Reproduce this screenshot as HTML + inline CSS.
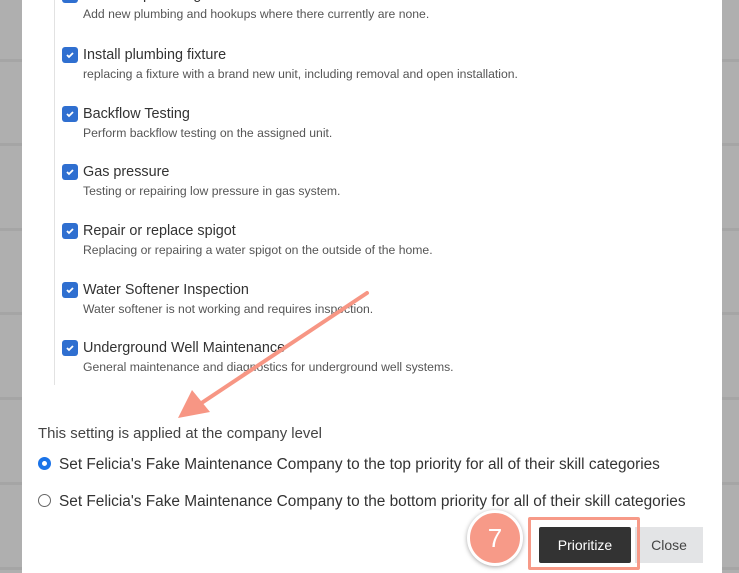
<!DOCTYPE html>
<html><head><style>
*{margin:0;padding:0;box-sizing:border-box}
body{width:739px;height:573px;overflow:hidden;background:#afafaf;position:relative;font-family:"Liberation Sans",Arial,sans-serif;color:#333}
.hl{position:absolute;height:3px;background:#a5a5a5}
.modal{position:absolute;left:22px;top:0;width:700px;height:573px;background:#fff}
.vline{position:absolute;left:32px;top:0;width:1px;height:385px;background:#e2e2e2}
.item{position:absolute;left:40px}
.cb{position:absolute;left:0;top:0;width:16px;height:16px;background:#2f6fd0;border-radius:3px}
.cb svg{position:absolute;left:2px;top:2px}
.t{position:absolute;left:21px;top:0px;font-size:14.4px;color:#333;white-space:nowrap}
.d{position:absolute;left:21px;top:20px;font-size:12.2px;color:#555;white-space:nowrap}
.txt{position:absolute;left:16px;top:426px;font-size:14.9px;color:#444}
.r{position:absolute;left:16px;font-size:15.4px;color:#333;white-space:nowrap}
.r span{display:inline-block;width:13px;height:13px;border-radius:50%;border:1px solid #666;vertical-align:-1px;margin-right:8px}
</style></head><body>
<div class="hl" style="left:0;top:59px;width:739px"></div>
<div class="hl" style="left:0;top:143px;width:739px"></div>
<div class="hl" style="left:0;top:228px;width:739px"></div>
<div class="hl" style="left:0;top:312px;width:739px"></div>
<div class="hl" style="left:0;top:397px;width:739px"></div>
<div class="hl" style="left:0;top:482px;width:739px"></div>
<div class="hl" style="left:0;top:567px;width:739px"></div>
<div class="modal">
<div class="vline"></div>
<div class="item" style="top:-13px"><div class="cb"><svg width="12" height="12"><path d="M3 6l2 2 4-4" stroke="#fff" stroke-width="1.8" fill="none"/></svg></div><div class="t">Add new plumbing</div><div class="d">Add new plumbing and hookups where there currently are none.</div></div>
<div class="item" style="top:47px"><div class="cb"><svg width="12" height="12"><path d="M3 6l2 2 4-4" stroke="#fff" stroke-width="1.8" fill="none"/></svg></div><div class="t">Install plumbing fixture</div><div class="d">replacing a fixture with a brand new unit, including removal and open installation.</div></div>
<div class="item" style="top:106px"><div class="cb"><svg width="12" height="12"><path d="M3 6l2 2 4-4" stroke="#fff" stroke-width="1.8" fill="none"/></svg></div><div class="t">Backflow Testing</div><div class="d">Perform backflow testing on the assigned unit.</div></div>
<div class="item" style="top:164px"><div class="cb"><svg width="12" height="12"><path d="M3 6l2 2 4-4" stroke="#fff" stroke-width="1.8" fill="none"/></svg></div><div class="t">Gas pressure</div><div class="d">Testing or repairing low pressure in gas system.</div></div>
<div class="item" style="top:223px"><div class="cb"><svg width="12" height="12"><path d="M3 6l2 2 4-4" stroke="#fff" stroke-width="1.8" fill="none"/></svg></div><div class="t">Repair or replace spigot</div><div class="d">Replacing or repairing a water spigot on the outside of the home.</div></div>
<div class="item" style="top:282px"><div class="cb"><svg width="12" height="12"><path d="M3 6l2 2 4-4" stroke="#fff" stroke-width="1.8" fill="none"/></svg></div><div class="t">Water Softener Inspection</div><div class="d">Water softener is not working and requires inspection.</div></div>
<div class="item" style="top:340px"><div class="cb"><svg width="12" height="12"><path d="M3 6l2 2 4-4" stroke="#fff" stroke-width="1.8" fill="none"/></svg></div><div class="t">Underground Well Maintenance</div><div class="d">General maintenance and diagnostics for underground well systems.</div></div>
<div class="txt">This setting is applied at the company level</div>
<div class="r" style="top:456px"><span style="border:4px solid #1a73e8"></span>Set Felicia's Fake Maintenance Company to the top priority for all of their skill categories</div>
<div class="r" style="top:493px"><span></span>Set Felicia's Fake Maintenance Company to the bottom priority for all of their skill categories</div>
<div style="position:absolute;left:517px;top:527px;width:92px;height:36px;background:#333;color:#fff;font-size:14px;line-height:36px;text-align:center;border-radius:2px">Prioritize</div>
<div style="position:absolute;left:613px;top:527px;width:68px;height:36px;background:#e3e4e6;color:#444;font-size:14px;line-height:36px;text-align:center">Close</div>
</div>
<div style="position:absolute;left:528px;top:517px;width:112px;height:53px;border:3px solid #f79a88;border-radius:2px"></div>
<div style="position:absolute;left:467px;top:510px;width:56px;height:56px;border-radius:50%;background:#f79a88;border:3px solid #fff;box-shadow:0 1px 5px rgba(0,0,0,.35);color:#fff;font-size:26px;line-height:50px;text-align:center">7</div>
<svg style="position:absolute;left:0;top:0" width="739" height="573"><path d="M367 293L200 404" stroke="#f79684" stroke-width="4" fill="none" stroke-linecap="round"/><path d="M178 418L192 390L210 412Z" fill="#f79684"/></svg>
</body></html>
